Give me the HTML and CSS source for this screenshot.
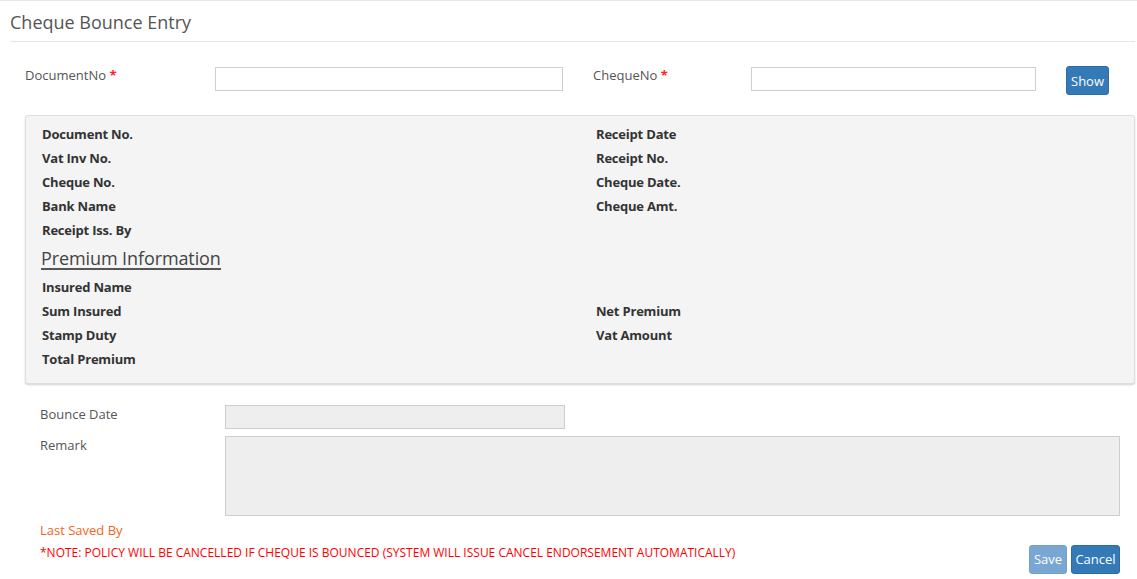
FILE: index.html
```html
<!DOCTYPE html>
<html>
<head>
<meta charset="utf-8">
<title>Cheque Bounce Entry</title>
<link rel="stylesheet" href="styles.css">
</head>
<body>
<div class="page">
  <div class="header"><h1 class="title">Cheque Bounce Entry</h1></div>

  <div class="search-row">
    <label class="lbl lbl-doc">DocumentNo <span class="req">*</span></label>
    <input class="txt txt-doc" type="text">
    <label class="lbl lbl-chq">ChequeNo <span class="req">*</span></label>
    <input class="txt txt-chq" type="text">
    <button class="btn btn-primary btn-show">Show</button>
  </div>

  <div class="panel">
    <div class="grid">
      <div class="cell">Document No.</div><div class="cell">Receipt Date</div>
      <div class="cell">Vat Inv No.</div><div class="cell">Receipt No.</div>
      <div class="cell">Cheque No.</div><div class="cell">Cheque Date.</div>
      <div class="cell">Bank Name</div><div class="cell">Cheque Amt.</div>
      <div class="cell">Receipt Iss. By</div><div class="cell"></div>
    </div>
    <h2 class="section"><span class="section-text">Premium Information</span></h2>
    <div class="grid grid-prem">
      <div class="cell">Insured Name</div><div class="cell"></div>
      <div class="cell">Sum Insured</div><div class="cell">Net Premium</div>
      <div class="cell">Stamp Duty</div><div class="cell">Vat Amount</div>
      <div class="cell">Total Premium</div><div class="cell"></div>
    </div>
  </div>

  <div class="form">
    <div class="form-row">
      <label class="flbl">Bounce Date</label>
      <input class="txt txt-disabled txt-date" type="text" disabled>
    </div>
    <div class="form-row form-row-remark">
      <label class="flbl">Remark</label>
      <textarea class="txt txt-disabled txt-remark" disabled></textarea>
    </div>
    <div class="saved">Last Saved By</div>
    <div class="foot">
      <div class="note">*NOTE: POLICY WILL BE CANCELLED IF CHEQUE IS BOUNCED (SYSTEM WILL ISSUE CANCEL ENDORSEMENT AUTOMATICALLY)</div>
      <div class="actions">
        <button class="btn btn-primary btn-disabled btn-save">Save</button>
        <button class="btn btn-primary btn-cancel">Cancel</button>
      </div>
    </div>
  </div>
</div>
</body>
</html>
```

FILE: styles.css
```css
* { box-sizing: border-box; }
html, body { margin: 0; padding: 0; background: #fff; }
body {
  font-family: "Open Sans", "Liberation Sans", sans-serif;
  font-size: 13px;
  color: #555;
  width: 1137px;
  height: 579px;
  overflow: hidden;
}
.page {
  border-top: 1px solid #e6e6e6;
}
.header {
  margin: 0 2px 0 10px;
  height: 41px;
  border-bottom: 1px solid #e6e6e6;
  display: flex;
  align-items: center;
}
.title {
  margin: 0;
  font-size: 18px;
  font-weight: 400;
  color: #555;
  line-height: 24px;
  padding-top: 1px;
}
.search-row {
  display: flex;
  align-items: flex-start;
  margin-top: 24px;
  padding-left: 25px;
  height: 29px;
}
.lbl {
  line-height: 18px;
  color: #555;
}
.lbl-doc { width: 190px; }
.lbl-chq { width: 158px; }
.req { color: #ff2222; font-weight: 700; }
.txt {
  display: block;
  height: 24px;
  border: 1px solid #cfcfcf;
  background: #fff;
  font-family: inherit;
  font-size: 13px;
  padding: 2px 6px;
  border-radius: 0;
  outline: none;
}
.search-row .txt { margin-top: 1px; }
.txt-doc { width: 348px; margin-right: 30px; }
.txt-chq { width: 285px; margin-right: 30px; }
.btn {
  font-family: inherit;
  font-size: 13px;
  height: 29px;
  line-height: 27px;
  padding: 0;
  border-radius: 3px;
  cursor: pointer;
  text-align: center;
}
.btn-primary {
  background: #337ab7;
  border: 1px solid #2e6da4;
  color: #fff;
}
.btn-show { width: 43px; line-height: 28px; }
.btn-disabled {
  background: #7aa6d2;
  border-color: #73a0cc;
}
.btn-save { width: 38px; }
.btn-cancel { width: 49px; }
.panel {
  margin: 20px 2px 0 25px;
  background: #f4f4f4;
  border: 1px solid #dedede;
  border-radius: 3px;
  box-shadow: 0 1px 2px rgba(0, 0, 0, 0.18);
  padding: 6px 16px 12px 16px;
  height: 269px;
}
.grid {
  display: grid;
  grid-template-columns: 554px 1fr;
}
.cell {
  height: 24px;
  line-height: 24px;
  font-weight: 700;
  color: #333;
  font-size: 13px;
  letter-spacing: -0.2px;
}
.section {
  margin: 6px 0 5px 0;
  font-size: 18px;
  font-weight: 400;
  line-height: 20px;
}
.section-text {
  display: inline-block;
  color: #444;
  border-bottom: 2px solid #555;
  padding-right: 0;
  margin-left: -1px;
  letter-spacing: -0.1px;
}
.form {
  padding: 21px 17px 0 40px;
}
.form-row {
  display: flex;
  align-items: flex-start;
}
.form-row-remark { margin-top: 7px; }
.flbl {
  width: 185px;
  line-height: 18px;
  color: #555;
}
.txt-disabled {
  background: #eee;
  border-color: #cdcdcd;
  resize: none;
}
.txt-date { width: 340px; }
.txt-remark { width: 895px; height: 80px; }
.saved {
  margin-top: 6px;
  line-height: 16px;
  color: #f26522;
}
.foot {
  display: flex;
  justify-content: space-between;
  align-items: flex-start;
  margin-top: 7px;
}
.note {
  color: #ff0000;
  font-size: 12px;
  line-height: 16px;
}
.actions {
  display: flex;
  gap: 4px;
}
```
